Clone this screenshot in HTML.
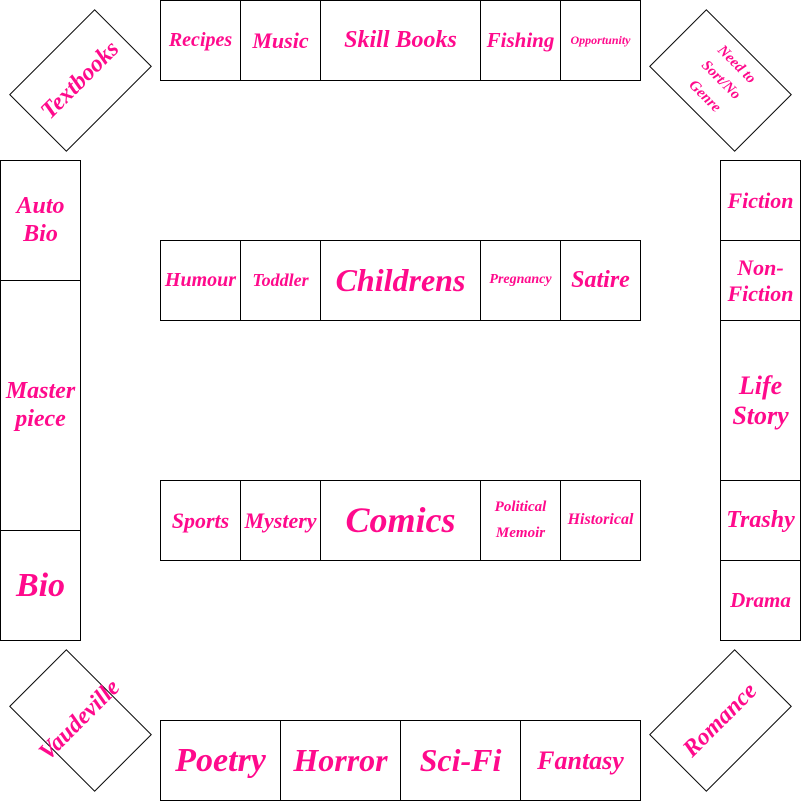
<!DOCTYPE html>
<html><head><meta charset="utf-8"><style>
html,body{margin:0;padding:0;background:#fff;width:801px;height:801px;overflow:hidden;position:relative}
.b{position:absolute;box-sizing:border-box;border:1px solid #000;display:flex;align-items:center;justify-content:center;text-align:center;color:#ff0a8c;font-family:"Liberation Serif",serif;font-style:italic;font-weight:bold;line-height:1.15;font-size:22px;white-space:nowrap;overflow:visible}
.r{width:121px;height:81px}
</style></head><body>
<!-- top row -->
<div class="b" style="left:160px;top:0;width:81px;height:81px;font-size:20px">Recipes</div>
<div class="b" style="left:240px;top:0;width:81px;height:81px;font-size:22px">Music</div>
<div class="b" style="left:320px;top:0;width:161px;height:81px;font-size:24px">Skill Books</div>
<div class="b" style="left:480px;top:0;width:81px;height:81px;font-size:21px">Fishing</div>
<div class="b" style="left:560px;top:0;width:81px;height:81px;font-size:12px">Opportunity</div>
<!-- left column -->
<div class="b" style="left:0;top:160px;width:81px;height:121px;font-size:24px;white-space:normal">Auto<br>Bio</div>
<div class="b" style="left:0;top:280px;width:81px;height:251px;font-size:24px">Master<br>piece</div>
<div class="b" style="left:0;top:530px;width:81px;height:111px;font-size:34px">Bio</div>
<!-- right column -->
<div class="b" style="left:720px;top:160px;width:81px;height:81px;font-size:22px">Fiction</div>
<div class="b" style="left:720px;top:240px;width:81px;height:81px;font-size:22px">Non-<br>Fiction</div>
<div class="b" style="left:720px;top:320px;width:81px;height:161px;font-size:26px">Life<br>Story</div>
<div class="b" style="left:720px;top:480px;width:81px;height:81px;font-size:24px">Trashy</div>
<div class="b" style="left:720px;top:560px;width:81px;height:81px;font-size:21px">Drama</div>
<!-- middle row 1 -->
<div class="b" style="left:160px;top:240px;width:81px;height:81px;font-size:20px">Humour</div>
<div class="b" style="left:240px;top:240px;width:81px;height:81px;font-size:18px">Toddler</div>
<div class="b" style="left:320px;top:240px;width:161px;height:81px;font-size:32px">Childrens</div>
<div class="b" style="left:480px;top:240px;width:81px;height:81px;font-size:14px">Pregnancy</div>
<div class="b" style="left:560px;top:240px;width:81px;height:81px;font-size:24px">Satire</div>
<!-- middle row 2 -->
<div class="b" style="left:160px;top:480px;width:81px;height:81px;font-size:22px">Sports</div>
<div class="b" style="left:240px;top:480px;width:81px;height:81px;font-size:22px">Mystery</div>
<div class="b" style="left:320px;top:480px;width:161px;height:81px;font-size:36px">Comics</div>
<div class="b" style="left:480px;top:480px;width:81px;height:81px;font-size:15px;line-height:1.7">Political<br>Memoir</div>
<div class="b" style="left:560px;top:480px;width:81px;height:81px;font-size:16px">Historical</div>
<!-- bottom row -->
<div class="b" style="left:160px;top:720px;width:121px;height:81px;font-size:34px">Poetry</div>
<div class="b" style="left:280px;top:720px;width:121px;height:81px;font-size:32px">Horror</div>
<div class="b" style="left:400px;top:720px;width:121px;height:81px;font-size:32px">Sci-Fi</div>
<div class="b" style="left:520px;top:720px;width:121px;height:81px;font-size:26px">Fantasy</div>
<!-- corners -->
<div class="b r" style="left:20px;top:40px;transform:rotate(-45deg);font-size:24px">Textbooks</div>
<div class="b r" style="left:660px;top:40px;transform:rotate(45deg);font-size:15px;line-height:1.5">Need to<br>Sort/No<br>Genre</div>
<div class="b r" style="left:20px;top:680px;transform:rotate(45deg)"><span style="display:inline-block;transform:rotate(-90deg);font-size:24px">Vaudeville</span></div>
<div class="b r" style="left:660px;top:680px;transform:rotate(-45deg);font-size:24px">Romance</div>
</body></html>
